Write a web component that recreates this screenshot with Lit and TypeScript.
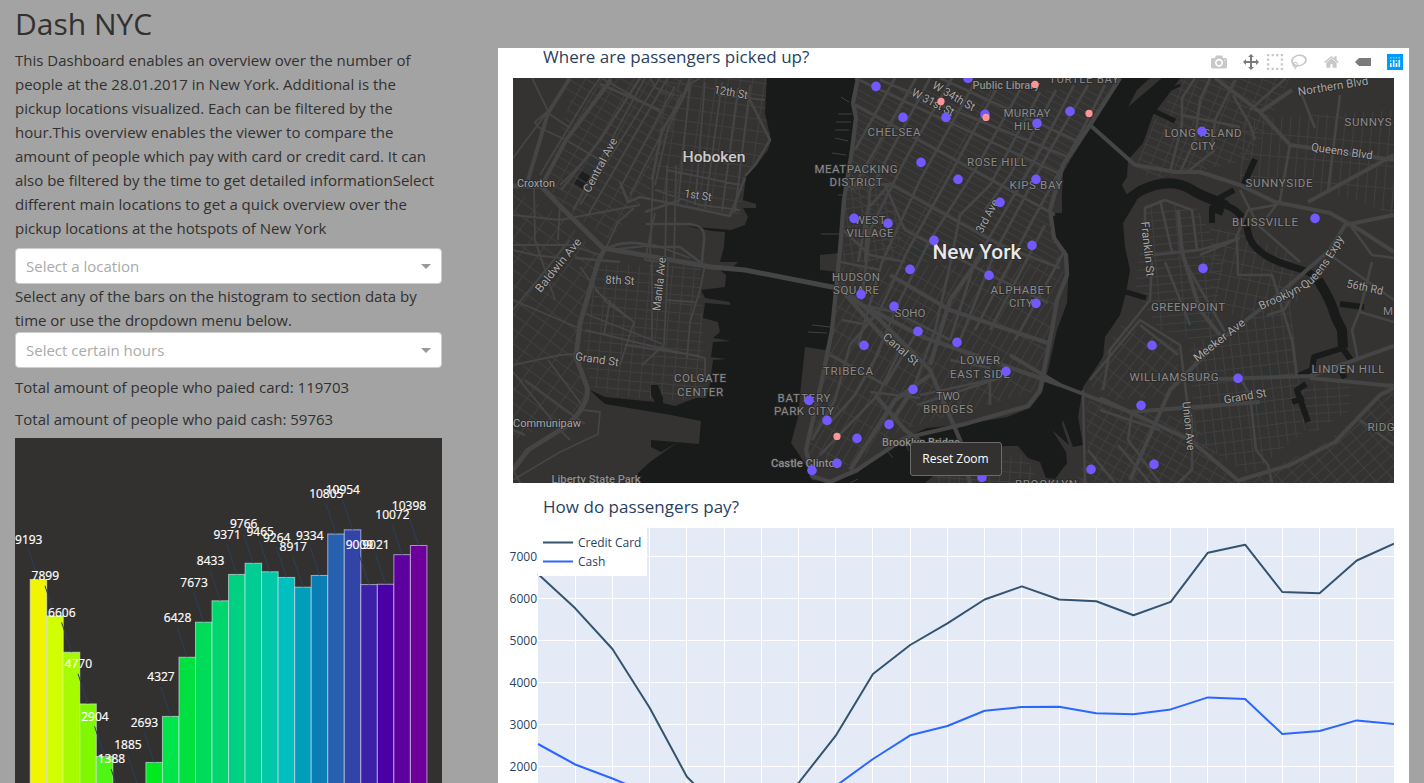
import { LitElement, html, svg, css } from "lit";
import { customElement } from "lit/decorators.js";

const FONT = css`"Open Sans", "Noto Sans", sans-serif`;

/* ---------- histogram ---------- */
const PICKUPS: [number, string][] = [
  [9193, "#f2f500"], [7899, "#d2ff00"], [6606, "#a6fb00"], [4770, "#7ff800"],
  [2904, "#50f514"], [1388, "#2af01a"], [1885, "#0cec1e"], [2693, "#00ea20"],
  [4327, "#00e54a"], [6428, "#00e040"], [7673, "#00db5a"], [8433, "#00d66e"],
  [9371, "#00d082"], [9766, "#00cc94"], [9465, "#00c8a8"], [9264, "#00bfbf"],
  [8917, "#009eba"], [9334, "#0a7db5"], [10805, "#2860b0"], [10954, "#3344a8"],
  [9009, "#3d20a8"], [9021, "#4a00a4"], [10072, "#5c009e"], [10398, "#6e009a"],
];

@customElement("pickup-histogram")
class PickupHistogram extends LitElement {
  static styles = css`
    :host { display: block; height: 450px; background: #323130; }
    svg { display: block; }
    .bar { stroke: #e5ecf6; stroke-opacity: 0.6; stroke-width: 1; }
    .arrow { stroke: #2a3f5f; stroke-width: 1; }
    .value { font: 12px ${FONT}; fill: #fff; text-anchor: middle; stroke: #fff; stroke-width: 0.2px; }
  `;
  render() {
    const w = 16.53;
    const top = (v: number) => 400.2 - v * 0.02815;
    return html`<svg width="427" height="450">
      ${PICKUPS.map(([v, c], i) => svg`<rect class="bar" x=${15.2 + i * w} y=${top(v)} width=${w} height=${400 - top(v)} fill=${c}></rect>`)}
      ${PICKUPS.map(([v], i) => {
        const cx = 15.2 + (i + 0.5) * w, y = top(v);
        return svg`<line class="arrow" x1=${cx - 10} y1=${y - 30} x2=${cx} y2=${y}></line>
          <text class="value" x=${cx - 9.7} y=${y - 35.7}>${v}</text>`;
      })}
    </svg>`;
  }
}

/* ---------- map ---------- */
const LAND = [
  "M513 78H767L766 93 765 113 771 140 768 150 755 167 746 177 743 200 756 204V208L743 208 748 217 745 225 731 230 686 226 712 231 725 232 724 247 720 262 738 262 732 268 720 270 726 275 725 287 701 290 705 298 730 302V305L705 303 703 318 718 322 720 332 713 338 731 341 713 342 711 357 727 359 713 360 710 383 706 398 696 398 685 402 675 406 663 403 663 398 658 385H651V395L655 402 605 397 590 390 596 396 605 404 641 410 671 415 701 421 699 444 651 440V447L661 452 678 442 650 462 638 473 637 483H513Z",
  "M860 78L853 103 855 117 853 150 847 173 843 200 842 227 840 253 820 255V270L838 272 835 300 830 343 825 350 805 347 801 385 798 417 791 443 798 453 807 467 812 480 830 482 857 473 883 452 907 437 927 428 967 424 1007 417 1030 408 1042 393 1048 370 1057 330 1067 303 1069 265 1060 245 1050 228V213H1062V193L1063 173 1072 157 1090 129 1110 97 1122 78Z",
  "M1128 107L1137 90 1150 78H1162Z",
  "M1180 78L1168 95 1158 108 1153 115 1143 143 1128 160 1127 177 1122 185 1127 195 1137 200 1123 223 1125 247 1130 270 1126 293 1120 315 1105 337 1103 357 1083 387 1078 417 1083 445 1073 447 1063 420 1062 424 1069 445 1052 430 1066 452 1067 463 1055 479 1046 478 1040 462 1028 458 1018 446 1005 446 985 450 940 470 925 483H1394V78Z",
];
const CREEKS: [number, string][] = [
  [10, "M1120 205L1140 191C1160 181 1178 181 1192 190S1218 200 1226 206"],
  [7, "M1222 204C1236 208 1246 218 1248 232S1264 258 1290 266 1308 272 1317 279"],
  [10, "M1318 280C1326 292 1332 304 1336 318L1342 330 1343 348"],
  [6, "M1340 304L1364 307M1343 348L1314 357 1312 370 1298 376M1343 349L1351 360M1340 370L1345 378"],
  [6, "M1216 200L1234 190M1244 184L1255 159M1212 223V208L1223 213"],
  [5, "M1154 111L1175 121M1126 292L1146 298"],
  [6, "M1306 384L1297 390 1308 422M1292 402L1304 398"],
  [3, "M1165 92L1180 85"],
];
/* street grids: cell width, cell height, angle, area */
const GRIDS: [number, number, number, string][] = [
  [14, 9, 30, "M560 78H690L650 190 610 240 560 205 545 185 570 100Z"],
  [12, 12, 8, "M660 78H767L770 140 745 180 740 215 655 200Z"],
  [11, 9, 5, "M600 265H700L705 400H660L610 395 590 385 582 320Z"],
  [15, 12, 36, "M513 190L560 215 600 255 578 330 585 405 560 420 513 440Z"],
  [70, 6.5, 29, "M858 90L1110 90 1060 180 1050 230 1062 262 1000 262 890 262 855 200 850 160Z"],
  [8, 9, -8, "M846 185L885 190 905 230 890 262 843 262Z"],
  [8, 22, 30, "M840 265L1000 265 1065 262 1050 340 1040 390 985 405 900 430 850 465 805 462 830 350Z"],
  [12, 8, 22, "M1180 80L1290 78 1250 160 1150 180 1135 165 1155 120Z"],
  [9, 22, 5, "M1240 120L1394 110V215L1340 195 1240 180Z"],
  [24, 8, -5, "M1145 205H1195L1225 260 1210 345 1160 330 1135 290Z"],
  [9, 14, 38, "M1120 325L1180 345 1175 395 1115 400 1088 385Z"],
  [9, 12, -7, "M1190 345L1290 300 1305 430 1250 475 1195 440Z"],
  [11, 9, 30, "M1085 400L1190 420 1240 483H1075L1088 450Z"],
  [14, 9, -42, "M1394 380L1330 440 1240 483H1394Z"],
  [10, 14, 12, "M1210 225L1290 250 1300 300 1240 320 1210 300Z"],
  [12, 8, -4, "M1300 385L1350 380 1350 410 1310 435Z"],
  [10, 10, 4, "M935 475L990 455 1025 455 1040 483H935Z"],
];
const ROADS: [number, string][] = [
  [1.8, "M532 78L548 111 535 122 538 127 566 140 600 160M548 111L513 158M548 113L570 128M560 185L573 172 580 165M573 210L645 78M580 205L660 78M588 215L668 78M600 78L590 92 540 175M620 188L675 86M630 195L682 94M603 79L660 112M650 78L656 88 675 95M655 185L668 128 690 84 700 78M513 215L560 220 640 205M534 183L535 240 555 300M513 250L534 255 560 258M560 205L558 240M585 330L660 348 705 358V378M625 345L700 356M586 314L662 344M634 322L620 365M595 290L634 322M610 300L604 335M513 300L560 320 583 330M513 365L560 355 576 354M525 380L585 424M513 372L560 430 570 440M513 480L560 452 598 434 600 412 583 410M513 470L530 500M548 360L582 405M653 178L650 260M667 165L665 262M676 165L674 262M690 82L678 205M705 82L695 205M722 82L705 208M738 88L722 210M750 85L735 212M655 190L700 205 740 210M655 213L645 260 660 262M634 208L618 222 605 250M668 262L664 345 642 365M705 265L700 290 690 322 687 358M652 262L652 340M665 300L695 302M570 240L513 310M600 255L570 245 513 245M608 250L655 245 690 258M667 170L740 185M718 95L765 100M580 267L606 302 634 322"],
  [2.6, "M611 78L566 140 543 183M600 84L660 110M640 78L600 140 561 190M620 182L628 202 640 197 730 216 745 178M652 180L662 130 682 100 690 78M745 90L770 140 755 165 745 176M645 212L680 200M646 224H690C702 226 705 230 704 240L702 262M605 250C620 240 640 242 655 247H680L704 265M575 258L620 262M513 430L525 435"],
  [4, "M570 78L548 113 531 170 528 180M611 80L566 140 543 183"],
  [5, "M513 186H541L561 207 603 248 711 267 745 270 837 288M605 248L598 262 580 323 576 357 587 387Q590 405 565 427L528 450 513 470"],
  [2.7, "M895 78L855 150M916 78L852 190M930 78L870 190 868 215 865 262M952 78L905 160 870 230 862 300M975 82L920 180 882 262 858 345M1000 82L950 175 908 250 880 310 850 345M1020 90L975 170 930 240 900 300 868 375M1040 92L990 185 960 215 950 265 935 330 913 389M1056 90L1010 175 985 210M1074 85L1035 160 975 262 950 340M1088 85L1050 150 995 252 960 340M1105 85L1085 125 1030 225 1000 282 975 330M1045 225L990 330M1065 250L1015 340M855 78L1062 175M880 80L1068 157M940 78L1075 140M855 105L1055 215M890 184L1000 245 1060 268M885 185L905 230 990 275 1048 303M846 187L890 184 868 208 858 262M843 230L870 255 905 262M841 262L880 270M838 285L862 305 895 312 950 340M842 320L863 324M830 355L885 385M885 385L918 330M917 405L1000 378M920 395L990 380V405M850 345L835 400 812 440M880 350L855 395 828 425M900 350L878 395 820 455M950 360L990 368M870 392L920 398"],
  [4.3, "M858 78L853 103 856 118 852 150 844 200 840 250 832 330 822 380 806 450 812 476 830 482 857 470 905 438 965 424 1028 406 1040 390 1052 330 1057 300 1067 275 1066 255 1054 238 1050 210 1063 165 1090 125 1120 78M890 275L950 310 1048 343M850 295L880 320 930 370 960 440 970 483M875 395L905 430 935 452M913 389L890 424M862 305L925 338 960 350 1060 385M840 288L890 345M930 365L950 300 985 250M930 375L895 400 850 470"],
  [4, "M1090 125L1135 165 1175 172 1200 172 1240 185 1275 202 1330 213 1360 230 1394 252M1010 355L1060 385 1130 412 1260 402M1215 78L1260 112 1290 145 1394 160M1260 112L1292 90M1308 202L1394 155M1100 398L1190 440 1240 482M1130 480L1170 390 1220 340 1270 302 1330 250 1345 225 1394 215M1178 210L1182 252 1200 310 1220 335M1190 380L1310 376 1394 346M1310 378L1394 386M1240 480L1290 465 1335 442 1380 395 1394 388"],
  [2.6, "M1195 78L1182 98V125L1170 172M1210 78L1200 100 1195 140 1180 172M1235 80L1215 120 1212 150M1233 95L1250 125 1255 140M1182 115L1240 127M1187 172L1215 150M1290 145L1280 200 1265 220M1340 95L1328 190M1275 205L1248 210 1235 240 1200 255M1350 225L1372 255 1394 258M1145 222V208L1165 200 1192 210 1197 250M1160 200L1172 252M1145 256L1200 250 1240 238M1237 240L1238 275 1272 275 1292 340 1297 378M1165 262L1190 325M1185 262L1225 332M1152 262L1150 300 1110 350 1103 390M1090 380L1140 320 1180 345 1187 400 1192 420V470M1140 325L1178 355M1250 395L1256 450 1268 465 1272 483M1240 378L1250 395M1290 300L1284 310 1267 315M1083 390L1085 483M1088 450L1115 483M1118 445L1150 483M1132 412L1128 440 1160 483M1192 470L1178 483M1240 190L1258 225 1300 262M1330 255L1394 300M1372 262L1360 310 1352 330 1358 360M1360 312L1394 322M1100 410L1160 430M1360 420L1394 445M1300 90L1315 128M1286 78L1250 110"],
];
const CAPS = "caps", SOFT = "soft", ROAD = "road", CITY = "city", BIG = "big";
const LABELS: [string, number, number, number, number, string][] = [
  ["12th St", 731, 92, 34, 10, ROAD], ["Central Ave", 600, 165, 60, -62, ROAD],
  ["Hoboken", 714, 156, 63, 0, CITY], ["1st St", 698, 195, 27, 8, ROAD],
  ["Croxton", 536, 183, 38, 0, ROAD], ["Baldwin Ave", 558, 265, 66, -51, ROAD],
  ["8th St", 620, 280, 29, 3, ROAD], ["Manila Ave", 659, 284, 54, -84, ROAD],
  ["Grand St", 597, 359, 44, 8, ROAD], ["COLGATE", 700, 378, 52, 0, CAPS],
  ["CENTER", 700, 391.5, 46, 0, CAPS], ["Communipaw", 547, 422.5, 68, 0, ROAD],
  ["Liberty State Park", 596, 479, 89, 0, SOFT], ["CHELSEA", 894, 132, 53, 0, CAPS],
  ["MEATPACKING", 856, 169, 83, 0, CAPS], ["DISTRICT", 856, 182, 53, 0, CAPS],
  ["W 31st St", 933, 102, 46, 27, ROAD], ["W 34th St", 954, 96, 47, 30, ROAD],
  ["Public Library", 1006, 85.5, 67, 0, SOFT], ["TURTLE BAY", 1084, 79, 70, 0, CAPS],
  ["MURRAY", 1027, 112.5, 47, 0, CAPS], ["HILL", 1027, 126, 26, 0, CAPS],
  ["ROSE HILL", 997, 162, 60, 0, CAPS], ["KIPS BAY", 1036, 185, 53, 0, CAPS],
  ["3rd Ave", 987, 216, 36, -62, ROAD], ["WEST", 870, 220, 31, 0, CAPS],
  ["VILLAGE", 870, 233, 47, 0, CAPS], ["New York", 977, 252, 89, 0, BIG],
  ["HUDSON", 856, 277, 48, 0, CAPS], ["SQUARE", 856, 290, 46, 0, CAPS],
  ["ALPHABET", 1021, 290, 61, 0, CAPS], ["CITY", 1021, 303, 24, 0, CAPS],
  ["SOHO", 910, 313, 31, 0, CAPS], ["Canal St", 901, 349, 43, 41, ROAD],
  ["TRIBECA", 848, 371, 50, 0, CAPS], ["LOWER", 980, 360, 40, 0, CAPS],
  ["EAST SIDE", 980, 373.5, 60, 0, CAPS], ["TWO", 948, 396, 24, 0, CAPS],
  ["BRIDGES", 948, 409, 50, 0, CAPS], ["BATTERY", 804, 398, 53, 0, CAPS],
  ["PARK CITY", 804, 411, 60, 0, CAPS], ["Brooklyn Bridge", 921, 442, 78, 0, SOFT],
  ["Castle Clinton", 806, 463, 70, 0, SOFT], ["BROOKLYN", 1046, 484, 62, 0, CAPS],
  ["LONG ISLAND", 1203, 132.5, 77, 0, CAPS], ["CITY", 1203, 146, 25, 0, CAPS],
  ["Northern Blvd", 1333, 86, 71, -9, ROAD], ["SUNNYS", 1368, 122, 47, 0, CAPS],
  ["Queens Blvd", 1342, 151, 62, 8, ROAD], ["SUNNYSIDE", 1279, 183, 67, 0, CAPS],
  ["BLISSVILLE", 1265, 222, 66, 0, CAPS], ["Franklin St", 1148, 249, 55, 84, ROAD],
  ["GREENPOINT", 1188, 307, 74, 0, CAPS], ["Meeker Ave", 1219, 340, 62, -38, ROAD],
  ["56th Rd", 1365, 287, 37, 12, ROAD], ["M", 1388, 311, 8, 0, CAPS],
  ["LINDEN HILL", 1348, 369, 73, 0, CAPS], ["WILLIAMSBURG", 1174, 377, 89, 0, CAPS],
  ["Grand St", 1245, 396, 43, -10, ROAD], ["Union Ave", 1189, 426, 49, 84, ROAD],
  ["RIDG", 1381, 427, 27, 0, CAPS],
];
const RIDES = [
  [876, 86], [903, 117], [946, 117], [968, 78], [985, 114], [1070, 111], [1037, 123],
  [921, 162], [958, 179], [1036, 179], [1000, 202], [854, 218], [888, 223], [934, 240],
  [1032, 245], [910, 269], [989, 275], [861, 294], [894, 306], [1036, 303], [918, 331],
  [864, 345], [957, 342], [1006, 371], [913, 389], [809, 400], [827, 420], [889, 424],
  [857, 438], [837, 463], [812, 470], [982, 477], [1091, 469], [1202, 131], [1315, 218],
  [1203, 268], [1152, 345], [1238, 378], [1141, 405], [1154, 464],
];
const HOTSPOTS = [[941, 101], [1035, 84], [986, 117], [1089, 113], [837, 436]];

@customElement("pickup-map")
class PickupMap extends LitElement {
  static styles = css`
    :host { display: block; position: relative; height: 405px; overflow: hidden; background: #191a1a; }
    svg { display: block; }
    .land { fill: #343332; }
    .park { fill: #2f3433; }
    .dark { fill: #1d1e1e; }
    .water { fill: none; stroke: #191a1a; stroke-linejoin: round; }
    .grid { fill: none; stroke: #403f3f; stroke-width: 1; }
    .road { fill: none; stroke: #464545; stroke-linejoin: round; }
    text { font-family: Roboto, "Noto Sans", sans-serif; text-anchor: middle; paint-order: stroke; stroke: #2b2a2a; stroke-width: 1.6px; }
    .caps { font-size: 11.5px; fill: #8b8b8b; }
    .soft { font-size: 11px; font-weight: 500; fill: #8f8f8f; }
    .road-name { font-size: 11.5px; fill: #a6a6a6; }
    .city { font-size: 15.5px; font-weight: 500; fill: #cccccc; }
    .big { font-size: 20px; font-weight: 500; fill: #e8e8e8; }
    .ride { fill: #7159ff; }
    .hot { fill: #ff9496; }
    .reset {
      position: absolute; left: 397px; top: 364px; width: 92px; height: 34px; box-sizing: border-box;
      padding: 0 1px 2px 0; border: 1px solid #6b6b6a; border-radius: 3px; background: #323130; color: #fff;
      font: 12px ${FONT}; text-align: center;
    }
  `;
  render() {
    return html`<svg width="881" height="405" viewBox="513 78 881 405">
        <defs>
          ${GRIDS.map(([w, h, a], i) => svg`<pattern id=${"g" + i} width=${w} height=${h} patternUnits="userSpaceOnUse" patternTransform=${`rotate(${a})`}><path class="grid" d=${`M0 .5H${w}M.5 0V${h}`}></path></pattern>`)}
          <clipPath id="shore">${LAND.map((d) => svg`<path d=${d}></path>`)}</clipPath>
          <path id="expy" d="M1254 313C1285 299 1306 292 1318 278S1337 250 1348 232"></path>
        </defs>
        ${LAND.map((d) => svg`<path class="land" d=${d}></path>`)}
        <path class="park" d="M588 160l10 4-4 12-12-4zM910 243l20 9-8 8-17-8zM1180 325l12-12 6 10-10 12zM1258 370l20-8v12l-14 6zM1205 435h10v9h-12zM1252 402l12-3 2 12-12 2z"></path>
        <path class="dark" d="M583 170l9 5-9 14-10-6z"></path>
        <g clip-path="url(#shore)">${GRIDS.map(([, , , d], i) => svg`<path fill=${`url(#g${i})`} d=${d}></path>`)}</g>
        ${CREEKS.map(([w, d]) => svg`<path class="water" stroke-width=${w} d=${d}></path>`)}
        ${ROADS.map(([w, d]) => svg`<path class="road" stroke-width=${w} d=${d}></path>`)}
        <path class="grid" d="M841 97l8 5M838 114h14M836 122h15M835 130h14M835 138l13 3M832 153l14 2M838 195h6M821 234h18M812 325l18 2M808 332l19 1M905 443l4 8M888 452l5 6M850 483l8-4"></path>
        ${LABELS.map(([t, x, y, w, r, k]) => svg`<text class=${k === ROAD ? "road-name" : k} transform=${`translate(${x} ${y}) rotate(${r})`} dy=".36em" textLength=${w} lengthAdjust=${k === CAPS ? "spacing" : "spacingAndGlyphs"}>${t}</text>`)}
        <text class="road-name"><textPath href="#expy" startOffset="50%">Brooklyn-Queens Expy</textPath></text>
        ${RIDES.map(([x, y]) => svg`<circle class="ride" cx=${x} cy=${y + 0.4} r="4.8"></circle>`)}
        ${HOTSPOTS.map(([x, y]) => svg`<circle class="hot" cx=${x} cy=${y + 0.4} r="3.6"></circle>`)}
      </svg>
      <button class="reset">Reset Zoom</button>`;
  }
}

/* ---------- modebar ---------- */
const ICONS: { box: string; d: string; size: number; gap: number; on?: boolean }[] = [
  { box: "0 0 1000 1000", size: 16, gap: 0, d: "m500 450c-83 0-150-67-150-150 0-83 67-150 150-150 83 0 150 67 150 150 0 83-67 150-150 150z m400 150h-120c-16 0-34 13-39 29l-31 93c-6 15-23 28-40 28h-340c-16 0-34-13-39-28l-31-94c-6-15-23-28-40-28h-120c-55 0-100-45-100-100v-450c0-55 45-100 100-100h800c55 0 100 45 100 100v450c0 55-45 100-100 100z m-400-550c-138 0-250 112-250 250 0 138 112 250 250 250 138 0 250-112 250-250 0-138-112-250-250-250z m365 380c-19 0-35 16-35 35 0 19 16 35 35 35 19 0 35-16 35-35 0-19-16-35-35-35z" },
  { box: "0 0 1000 1000", size: 16, gap: 16, on: true, d: "m1000 350l-187 188 0-125-250 0 0 250 125 0-188 187-187-187 125 0 0-250-250 0 0 125-188-188 186-187 0 125 252 0 0-250-125 0 187-188 188 188-125 0 0 250 250 0 0-126 187 188z" },
  { box: "0 0 1000 1000", size: 16, gap: 8, d: "m0 850l0-143 143 0 0 143-143 0z m286 0l0-143 143 0 0 143-143 0z m285 0l0-143 143 0 0 143-143 0z m286 0l0-143 143 0 0 143-143 0z m-857-286l0-143 143 0 0 143-143 0z m857 0l0-143 143 0 0 143-143 0z m-857-285l0-143 143 0 0 143-143 0z m857 0l0-143 143 0 0 143-143 0z m-857-286l0-143 143 0 0 143-143 0z m286 0l0-143 143 0 0 143-143 0z m285 0l0-143 143 0 0 143-143 0z m286 0l0-143 143 0 0 143-143 0z" },
  { box: "0 0 1031 1000", size: 16, gap: 8, d: "m1018 538c-36 207-290 336-568 286-277-48-473-256-436-463 10-57 36-108 76-151-13-66 11-137 68-183 34-28 75-41 114-42l-55-70 0 0c-2-1-3-2-4-3-10-14-8-34 5-45 14-11 34-8 45 4 1 1 2 3 2 5l0 0 113 140c16 11 31 24 45 40 4 3 6 7 8 11 48-3 100 0 151 9 278 48 473 255 436 462z m-624-379c-80 14-149 48-197 96 42 42 109 47 156 9 33-26 47-66 41-105z m-187-74c-19 16-33 37-39 60 50-32 109-55 174-68-42-25-95-24-135 8z m360 75c-34-7-69-9-102-8 8 62-16 128-68 170-73 59-175 54-244-5-9 20-16 40-20 61-28 159 121 317 333 354s407-60 434-217c28-159-121-318-333-355z" },
  { box: "0 0 928.6 1000", size: 15, gap: 16.500, d: "m786 296v-267q0-15-11-26t-25-10h-214v214h-143v-214h-214q-15 0-25 10t-11 26v267q0 1 0 2t0 2l321 264 321-264q1-1 1-4z m124 39l-34-41q-5-5-12-6h-2q-7 0-12 3l-386 322-386-322q-7-4-13-4-7 2-12 7l-35 41q-4 5-3 13t6 12l401 334q18 15 42 15t43-15l136-114v109q0 8 5 13t13 5h107q8 0 13-5t5-13v-227l122-102q5-5 6-12t-4-13z" },
  { box: "0 0 1500 1000", size: 16, gap: 16.500, on: true, d: "m375 725l0 0-375-375 375-374 0-1 1125 0 0 750-1125 0z" },
];

@customElement("chart-modebar")
class ChartModebar extends LitElement {
  static styles = css`
    :host { display: flex; align-items: center; height: 16px; }
    svg { display: block; height: 16px; }
    path { fill: #c8c8c8; }
    .on { fill: #7b7b7b; }
    .logo { margin-left: 16px; }
    .tile { fill: #0099ff; }
    .mark { fill: #fff; }
    .dot { fill: #66f2ff; }
  `;
  render() {
    return html`${ICONS.map((i) => html`<svg width=${i.size} height="16" viewBox=${i.box} style="margin-left:${i.gap}px"><path class=${i.on ? "on" : ""} transform="matrix(1 0 0 -1 0 850)" d=${i.d}></path></svg>`)}
      <svg class="logo" width="16" height="16" viewBox="0 0 16 16">
        <rect class="tile" width="16" height="16"></rect>
        <path class="mark" d="M3 9h1.600v4H3zM5.900 6.100h1.600V13H5.900zM8.700 9h1.600v4H8.700zM11.500 6.100h1.600V13h-1.600z"></path>
        <path class="dot" d="M3 3.200h1.500v1.400H3zM5.900 3.200h1.500v1.400H5.900zM8.700 3.200h1.500v1.400H8.700zM11.500 3.200H13v1.400h-1.500zM3 6h1.500v1.400H3zM8.700 6h1.500v1.400H8.700z"></path>
      </svg>`;
  }
}

/* ---------- line chart ---------- */
const CREDIT = [574, 608.3, 649, 707.7, 776.7, 814, 812, 783, 735.7, 674, 645, 623.3, 599.5, 586.4, 599.5, 601.3, 615.3, 601.9, 552.7, 544.7, 592, 593.3, 560.5, 543.7];
const CASH = [744, 764.5, 778.5, 794, 813, 825, 822, 808, 786, 759, 735.3, 726, 710.8, 707, 706.8, 713.2, 714.3, 709.4, 697.4, 699, 734, 731, 720.4, 724];

@customElement("payment-chart")
class PaymentChart extends LitElement {
  static styles = css`
    :host { display: block; height: 300px; }
    svg { display: block; }
    .plot { fill: #e4ebf7; }
    .gridline { stroke: #fff; stroke-width: 1; fill: none; }
    .credit, .cash { fill: none; stroke-width: 2; stroke-linejoin: round; }
    .credit { stroke: #34536f; }
    .cash { stroke: #2b66ff; }
    .panel { fill: #fff; }
    text { font: 12px ${FONT}; fill: #2a3f5f; }
    .tick { text-anchor: end; }
  `;
  render() {
    const step = 856 / 23;
    const line = (p: number[]) => p.map((y, i) => `${i ? "L" : "M"}${538 + i * step} ${y}`).join("");
    return html`<svg width="896" height="300" viewBox="498 528 896 300">
      <rect class="plot" x="538" y="528" width="856" height="300"></rect>
      ${Array.from({ length: 22 }, (_, i) => svg`<path class="gridline" d=${`M${Math.floor(538 + (i + 1) * step) + 0.5} 528V828`}></path>`)}
      ${[7000, 6000, 5000, 4000, 3000, 2000].map((v, i) => svg`<path class="gridline" d=${`M538 ${556.5 + i * 42}H1394`}></path><text class="tick" x="537" y=${560.7 + i * 42}>${v}</text>`)}
      <path class="credit" d=${line(CREDIT)}></path>
      <path class="cash" d=${line(CASH)}></path>
      <rect class="panel" x="538" y="528" width="109" height="48"></rect>
      <path class="credit" d="M543 542.5h30"></path><text x="578" y="547">Credit Card</text>
      <path class="cash" d="M543 561.5h30"></path><text x="578" y="566">Cash</text>
    </svg>`;
  }
}

/* ---------- page ---------- */
@customElement("app-root")
class AppRoot extends LitElement {
  static styles = css`
    :host {
      display: flex; align-items: flex-start; height: 783px; overflow: hidden; box-sizing: border-box;
      background: #a3a3a3; color: #323130; font: 15px/24px ${FONT};
    }
    .side { width: 427px; margin-left: 15px; flex: none; }
    h1 { margin: 0; padding-top: 6px; height: 42px; line-height: 36px; font-size: 30px; font-weight: 400; }
    p { margin: 0; white-space: nowrap; }
    .intro { margin-bottom: 8px; }
    .select {
      display: flex; align-items: center; justify-content: space-between; box-sizing: border-box; height: 36px;
      padding: 0 10px; border: 1px solid #ccc; border-radius: 4px; background: #fff; color: #aaa;
    }
    .caret { border: 5px solid transparent; border-top-color: #999; border-bottom-width: 0; }
    .totals { display: grid; gap: 8px; padding: 7px 0; }
    .main { width: 911px; height: 800px; margin: 48px 0 0 56px; flex: none; background: #fff; }
    .head { display: flex; justify-content: space-between; height: 30px; padding: 0 6px 0 45px; }
    h2 { margin: 0; font-size: 17px; font-weight: 400; line-height: 18px; letter-spacing: 0.03px; color: #2a3f5f; white-space: nowrap; }
    chart-modebar { margin-top: 6px; }
    pickup-map { margin: 0 15px; }
    .pay { padding: 15px 0 0 45px; height: 30px; }
  `;
  render() {
    return html`<section class="side">
        <h1>Dash NYC</h1>
        <p class="intro">This Dashboard enables an overview over the number of<br />people at the 28.01.2017 in New York. Additional is the<br />pickup locations visualized. Each can be filtered by the<br />hour.This overview enables the viewer to compare the<br />amount of people which pay with card or credit card. It can<br />also be filtered by the time to get detailed informationSelect<br />different main locations to get a quick overview over the<br />pickup locations at the hotspots of New York</p>
        <div class="select"><span>Select a location</span><i class="caret"></i></div>
        <p>Select any of the bars on the histogram to section data by<br />time or use the dropdown menu below.</p>
        <div class="select"><span>Select certain hours</span><i class="caret"></i></div>
        <div class="totals">
          <p>Total amount of people who paied card: 119703</p>
          <p>Total amount of people who paid cash: 59763</p>
        </div>
        <pickup-histogram></pickup-histogram>
      </section>
      <section class="main">
        <div class="head"><h2>Where are passengers picked up?</h2><chart-modebar></chart-modebar></div>
        <pickup-map></pickup-map>
        <h2 class="pay">How do passengers pay?</h2>
        <payment-chart></payment-chart>
      </section>`;
  }
}
